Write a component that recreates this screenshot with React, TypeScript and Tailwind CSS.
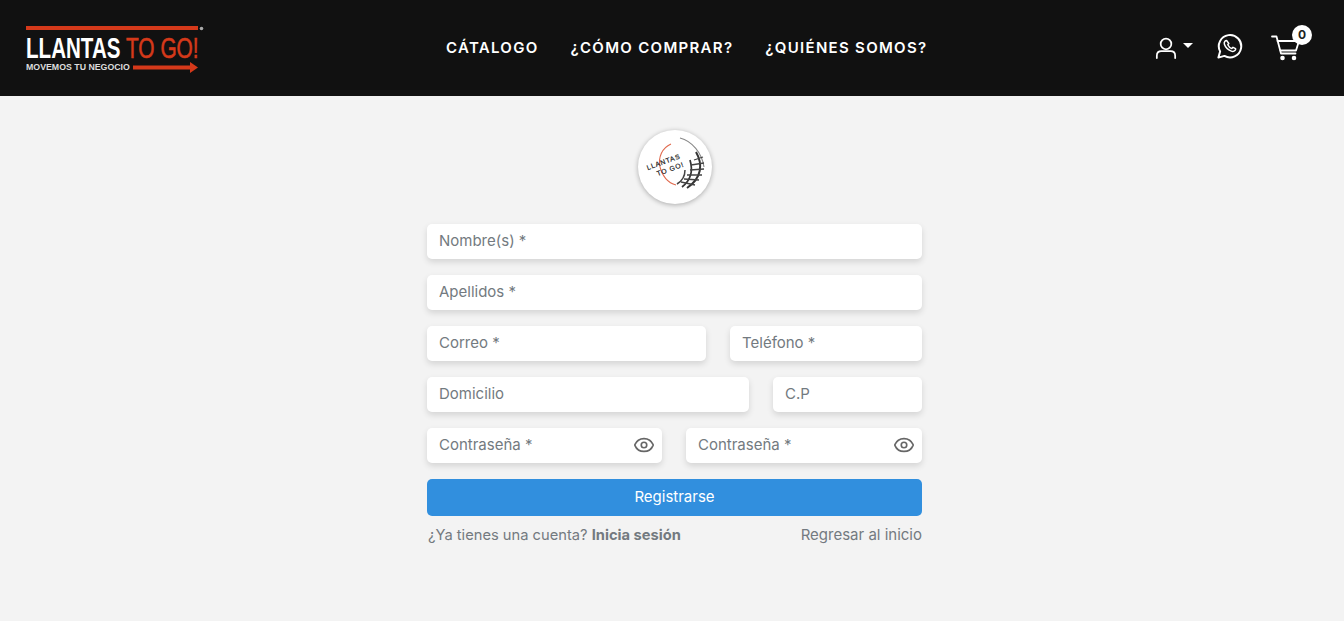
import { Eye } from "lucide-react";

const inputCls =
  "h-[35px] w-full rounded-[5px] bg-white px-3 pb-[2px] text-[15px] text-[#495057] shadow-[0_3px_6px_rgba(0,0,0,0.13)] outline-none placeholder:text-[#737a80]";

function Logo() {
  return (
    <svg width="185" height="56" viewBox="25 20 185 56" className="shrink-0">
      <rect x="26" y="26" width="172" height="4" fill="#d5391a" />
      <text transform="translate(26 58) scale(0.71 1)" fontFamily="Liberation Sans, sans-serif" fontWeight="700" fontSize="29" fill="#fff">LLANTAS</text>
      <text transform="translate(126 58) scale(0.72 1)" fontFamily="Liberation Sans, sans-serif" fontSize="29" fill="#d5391a" stroke="#d5391a" strokeWidth="0.6">TO GO!</text>
      <text transform="translate(26 70) scale(0.925 1)" fontFamily="Liberation Sans, sans-serif" fontWeight="700" fontSize="9.500" fill="#dddddd">MOVEMOS TU NEGOCIO</text>
      <path d="M133 65.500h57v-3.500l8 5.500-8 5.500v-3.500h-57z" fill="#d5391a" />
      <circle cx="201.500" cy="28.500" r="1.800" fill="#aaa" />
    </svg>
  );
}

function UserIcon() {
  return (
    <svg width="22" height="22" viewBox="0 0 24 24" fill="none" stroke="#fff" strokeWidth="1.900" strokeLinecap="round">
      <circle cx="12" cy="7.600" r="5.800" />
      <path d="M2 23v-2.500c0-3.200 2.200-5 5-5h10c2.800 0 5 1.800 5 5V23" />
    </svg>
  );
}

function WhatsappIcon() {
  return (
    <svg width="26" height="26" viewBox="0 0 26 26" fill="none" stroke="#fff" strokeWidth="2" strokeLinejoin="round">
      <path d="M1.400 24.600l1.700-6.200A11.200 11.200 0 1 1 7.400 22.900z" />
      <path
        d="M9.600 7.400c-.5 0-1.200.2-1.700.9-.6.8-.9 1.800-.5 3 .9 2.700 3.900 5.700 6.900 6.800 1.600.6 3 .1 3.800-.8.5-.6.6-1.300.5-1.700l-2.600-1.300-1.200 1.300c-1.700-.7-3.200-2.200-4-3.900l1-1.200z"
        strokeWidth="1.500"
      />
    </svg>
  );
}

function CartIcon() {
  return (
    <svg width="30" height="26" viewBox="0 0 30 26" fill="none" stroke="#fff" strokeWidth="1.800" strokeLinecap="round" strokeLinejoin="round">
      <path d="M1 1.500h4.500l4.500 17h14.500" />
      <path d="M6.500 6h21.500l-3 9.500H9.500" />
      <circle cx="11.500" cy="23" r="1.400" fill="#fff" />
      <circle cx="23" cy="23" r="1.400" fill="#fff" />
    </svg>
  );
}

function TireBadge() {
  return (
    <div className="h-[74px] w-[74px] rounded-full bg-white shadow-[0_1px_5px_rgba(0,0,0,0.3)]">
      <svg width="74" height="74" viewBox="0 0 74 74" fill="none">
        <path d="M33 14C24 18 20 27 22 37c2 9 8 16 16 18" stroke="#e0694d" strokeWidth="1.100" />
        <path d="M42 8c12 3 22 15 24 29" stroke="#888" strokeWidth="1.100" />
        <path d="M58 22c7 12 6 26-9 36" stroke="#333" strokeWidth="2" />
        <path d="M52 30c3 10 1 20-8 27" stroke="#333" strokeWidth="1.700" />
        <path d="M47 40c0 6-3 11-8 14" stroke="#444" strokeWidth="1.500" />
        <path d="M65 27l-9 3M66 33l-13 2M66 39l-14 1M64 45l-15 0M61 50l-15-1M57 55l-14-3" stroke="#444" strokeWidth="1.300" />
        <g transform="rotate(-20 27 36)" fontFamily="Liberation Sans, sans-serif" fontSize="6.800" fill="#222" textAnchor="middle" letterSpacing="0.800" stroke="#222" strokeWidth="0.200">
          <text x="27" y="34">LLANTAS</text>
          <text x="31" y="43">TO GO!</text>
        </g>
      </svg>
    </div>
  );
}

function PasswordField({ className }: { className: string }) {
  return (
    <div className={"relative " + className}>
      <input className={inputCls} placeholder="Contraseña *" type="password" />
      <Eye size={22} strokeWidth={1.800} className="absolute right-[7px] top-[6px] text-[#666]" />
    </div>
  );
}

export default function App() {
  return (
    <div className="min-h-[621px] bg-[#f3f3f3] font-['Inter',sans-serif]">
      <header className="flex h-[96px] items-center bg-[#111111] pl-[25px] pr-[32px]">
        <Logo />
        <nav className="ml-[236px] flex gap-[32px] text-[15px] font-semibold tracking-[1.3px] text-white">
          <a>CÁTALOGO</a>
          <a>¿CÓMO COMPRAR?</a>
          <a>¿QUIÉNES SOMOS?</a>
        </nav>
        <div className="ml-auto mr-[11px] flex items-center">
          <UserIcon />
          <span className="ml-[6px] mb-[5px] h-0 w-0 border-x-[5px] border-t-[5px] border-x-transparent border-t-white" />
          <span className="mb-[5px] ml-[24px] flex"><WhatsappIcon /></span>
          <span className="relative ml-[28px] flex">
            <CartIcon />
            <span className="absolute -right-[11px] -top-[10px] flex h-[20px] w-[20px] items-center justify-center rounded-full bg-white text-[12px] font-bold text-[#222]">0</span>
          </span>
        </div>
      </header>

      <main className="ml-[427px] flex w-[495px] flex-col pt-[34px]">
        <div className="mb-[20px] flex justify-center pl-[1px]">
          <TireBadge />
        </div>
        <div className="flex flex-col gap-[16px]">
          <input className={inputCls} placeholder="Nombre(s) *" />
          <input className={inputCls} placeholder="Apellidos *" />
          <div className="flex gap-[24px]">
            <div className="w-[279px]"><input className={inputCls} placeholder="Correo *" /></div>
            <div className="flex-1"><input className={inputCls} placeholder="Teléfono *" /></div>
          </div>
          <div className="flex gap-[24px]">
            <div className="w-[322px]"><input className={inputCls} placeholder="Domicilio" /></div>
            <div className="flex-1"><input className={inputCls} placeholder="C.P" /></div>
          </div>
          <div className="flex gap-[24px]">
            <PasswordField className="w-[235px]" />
            <PasswordField className="flex-1" />
          </div>
          <button className="h-[37px] rounded-[5px] bg-[#318fde] text-[15px] text-white">Registrarse</button>
        </div>
        <div className="mt-[9px] flex justify-between pl-[1px] text-[15px] leading-[20px] text-[#737a80]">
          <span className="text-[14.7px]">
            ¿Ya tienes una cuenta? <b className="font-bold">Inicia sesión</b>
          </span>
          <span>Regresar al inicio</span>
        </div>
      </main>
    </div>
  );
}
